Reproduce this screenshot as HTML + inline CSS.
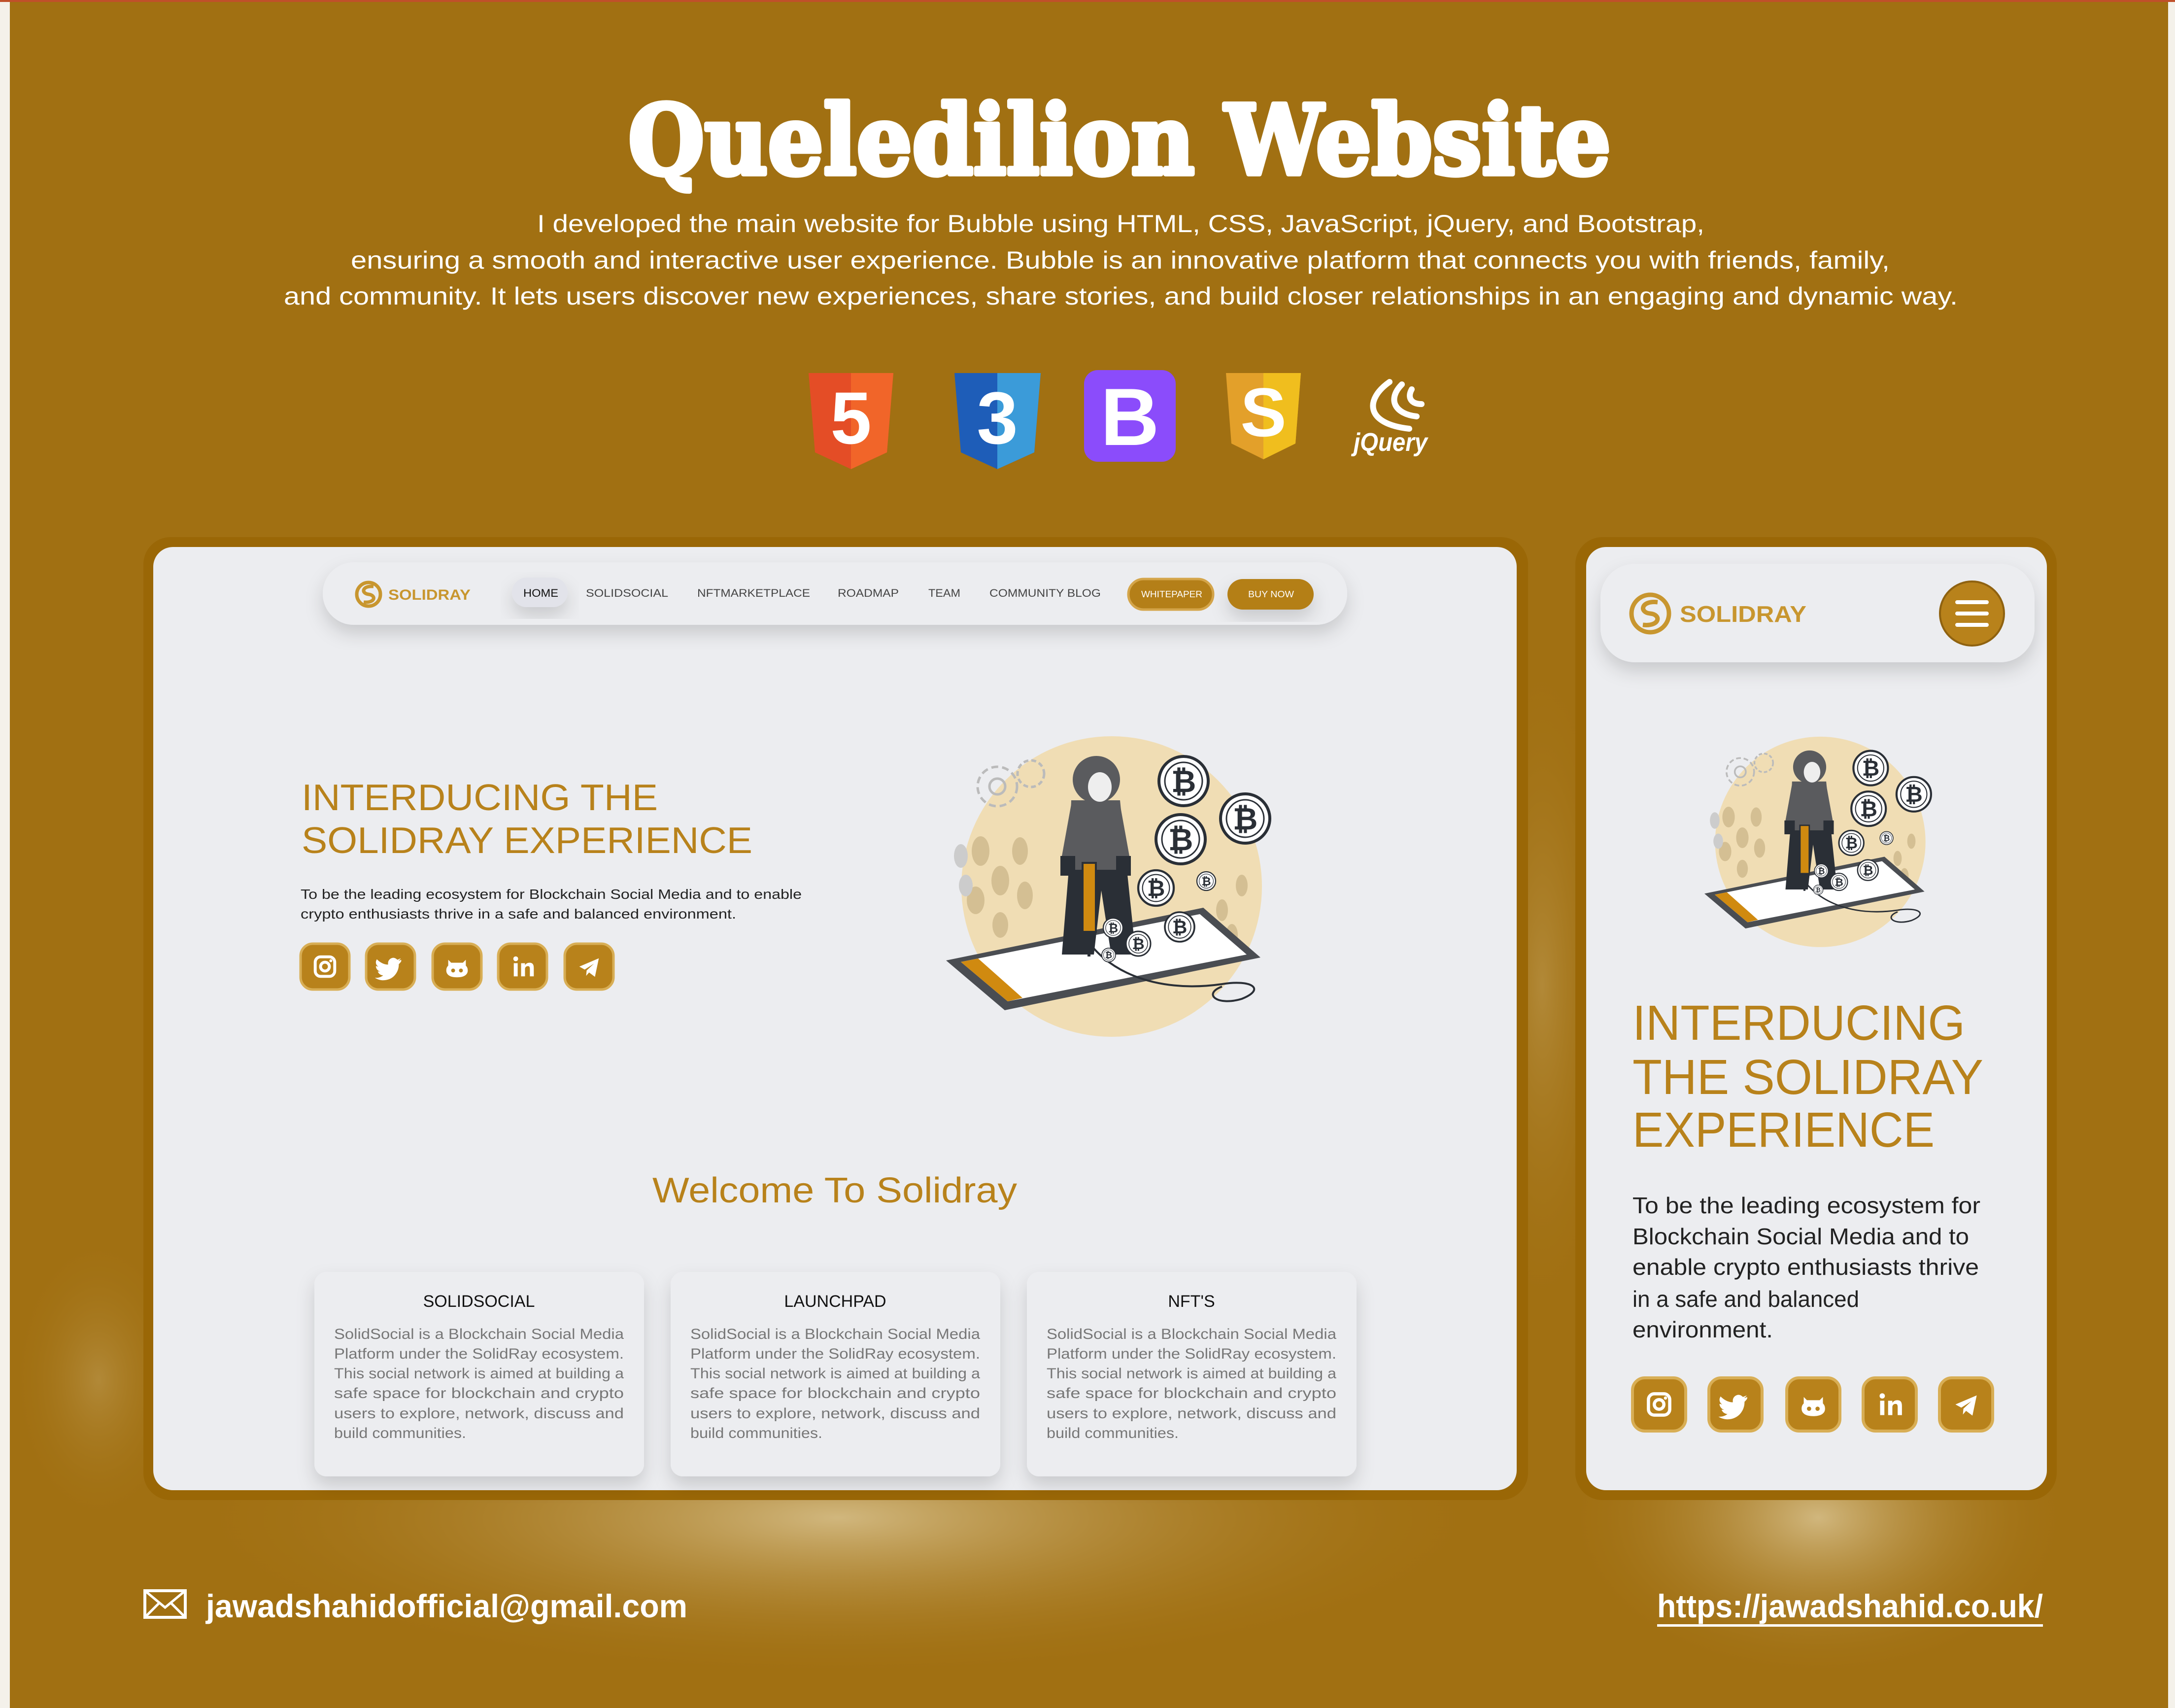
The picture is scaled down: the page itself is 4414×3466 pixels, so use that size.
<!DOCTYPE html>
<html><head><meta charset="utf-8"><style>html,body{margin:0;padding:0;background:#A17012}svg{display:block}</style></head><body>
<svg width="4414" height="3466" viewBox="0 0 4414 3466" xmlns="http://www.w3.org/2000/svg" font-family="Liberation Sans, sans-serif">
<defs>
<radialGradient id="g1" cx="50%" cy="50%" r="50%"><stop offset="0" stop-color="#D9C390" stop-opacity=".85"/><stop offset="1" stop-color="#A17012" stop-opacity="0"/></radialGradient>
<filter id="sh" x="-20%" y="-20%" width="140%" height="160%"><feDropShadow dx="0" dy="18" stdDeviation="18" flood-color="#000" flood-opacity=".15"/></filter>
<symbol id="ig" viewBox="0 0 100 100"><rect x="30" y="30" width="40" height="40" rx="11" fill="none" stroke="#fff" stroke-width="6"/><circle cx="50" cy="50" r="9" fill="none" stroke="#fff" stroke-width="6"/><circle cx="62" cy="38" r="3" fill="#fff"/></symbol>
<symbol id="tw" viewBox="0 0 100 100"><path d="M72 36c-2 1-4 2-6 2 2-1 4-3 5-5-2 1-4 2-7 3-2-2-5-4-8-4-6 0-11 5-11 11 0 1 0 2 0 3-9 0-17-5-23-11-1 2-2 4-2 6 0 4 2 7 5 9-2 0-3-1-5-1 0 5 4 10 9 11-1 0-2 0-3 0h-2c1 4 6 8 11 8-4 3-9 5-14 5h-3c5 3 11 5 17 5 21 0 32-17 32-32v-1c2-2 4-4 5-6z" fill="#fff"/></symbol>
<symbol id="gh" viewBox="0 0 100 100"><path d="M32 36l6 6h24l6-6v12c3 3 4 6 4 10 0 9-8 14-22 14s-22-5-22-14c0-4 1-7 4-10z" fill="#fff"/><circle cx="42" cy="58" r="4" fill="#B8821B"/><circle cx="58" cy="58" r="4" fill="#B8821B"/></symbol>
<symbol id="li" viewBox="0 0 100 100"><rect x="32" y="43" width="8" height="27" fill="#fff"/><circle cx="36" cy="34" r="5" fill="#fff"/><path d="M47 43h8v4c2-3 5-5 9-5 7 0 9 4 9 11v17h-8v-15c0-4-1-6-4-6s-6 2-6 6v15h-8z" fill="#fff"/></symbol>
<symbol id="tg" viewBox="0 0 100 100"><path d="M30 50l40-17-8 38-12-9-6 7 1-11 15-14-19 12z" fill="#fff"/></symbol>
<g id="coin"><circle r="50" fill="#fff" stroke="#2a2f36" stroke-width="6"/><circle r="38" fill="none" stroke="#2a2f36" stroke-width="3"/><text y="22" text-anchor="middle" font-size="62" font-weight="bold" fill="#2a2f36">₿</text></g>
<g id="illus">
<ellipse cx="336" cy="302" rx="305" ry="305" fill="#F0DDB4"/>
<circle cx="104" cy="99" r="40" fill="none" stroke="#bbb" stroke-width="5" stroke-dasharray="14 8"/><circle cx="104" cy="99" r="16" fill="none" stroke="#bbb" stroke-width="5"/>
<circle cx="172" cy="73" r="27" fill="none" stroke="#bbb" stroke-width="5" stroke-dasharray="10 6"/>
<g fill="#D4BF93"><ellipse cx="70" cy="230" rx="18" ry="30"/><ellipse cx="110" cy="290" rx="18" ry="30"/><ellipse cx="60" cy="330" rx="18" ry="28"/><ellipse cx="150" cy="230" rx="16" ry="28"/><ellipse cx="160" cy="320" rx="16" ry="28"/><ellipse cx="110" cy="380" rx="16" ry="26"/><ellipse cx="560" cy="350" rx="12" ry="22"/><ellipse cx="600" cy="300" rx="12" ry="22"/><ellipse cx="580" cy="400" rx="12" ry="22"/></g>
<g fill="#ccc"><ellipse cx="30" cy="240" rx="14" ry="24"/><ellipse cx="40" cy="300" rx="14" ry="22"/></g>
<path d="M0 452L522 345L638 446L119 553Z" fill="#4a4d52"/>
<path d="M30 455L515 358L610 440L125 535Z" fill="#fff"/>
<path d="M30 455L65 448L155 528L125 535Z" fill="#D08A10"/>
<path d="M280 400C320 470 420 520 560 500C620 490 650 510 600 530C550 545 520 520 560 505" fill="none" stroke="#2a2f36" stroke-width="4"/>
<path d="M249 268L367 268L385 440L335 440L315 310L300 440L235 440Z" fill="#2a2f36"/>
<path d="M254 127L353 127L367 268L249 268Z" fill="#5a5b5e"/>
<path d="M254 135L235 240L260 245L270 160Z" fill="#5a5b5e"/><path d="M353 135L372 240L348 245L340 160Z" fill="#5a5b5e"/>
<rect x="232" y="240" width="30" height="40" fill="#2a2f36"/><rect x="345" y="240" width="30" height="40" fill="#2a2f36"/>
<circle cx="305" cy="85" r="48" fill="#5a5b5e"/><ellipse cx="312" cy="100" rx="24" ry="30" fill="#eee"/>
<rect x="277" y="254" width="27" height="140" fill="#D08A10" stroke="#2a2f36" stroke-width="4"/>
<rect x="287" y="394" width="6" height="50" fill="#2a2f36"/>
<use href="#coin" transform="translate(482,88) scale(1)"/>
<use href="#coin" transform="translate(607,164) scale(1)"/>
<use href="#coin" transform="translate(476,206) scale(1)"/>
<use href="#coin" transform="translate(426,305) scale(.72)"/>
<use href="#coin" transform="translate(528,291) scale(.38)"/>
<use href="#coin" transform="translate(474,384) scale(.6)"/>
<use href="#coin" transform="translate(390,418) scale(.5)"/>
<use href="#coin" transform="translate(339,386) scale(.4)"/>
<use href="#coin" transform="translate(330,441) scale(.28)"/>
</g>
</defs>

<rect width="4414" height="3466" fill="#A17012"/>
<rect x="0" y="0" width="20" height="3466" fill="#F4F1EA"/>
<rect x="4400" y="0" width="14" height="3466" fill="#F4F1EA"/>
<rect x="0" y="0" width="4414" height="4" fill="#C0502A"/>

<ellipse cx="1700" cy="3080" rx="1350" ry="330" fill="url(#g1)"/>
<ellipse cx="3690" cy="3080" rx="520" ry="330" fill="url(#g1)"/>
<ellipse cx="200" cy="2800" rx="180" ry="300" fill="url(#g1)" opacity=".35"/>
<ellipse cx="3130" cy="2000" rx="150" ry="700" fill="url(#g1)" opacity=".35"/>

<text x="1275" y="353" font-family="DejaVu Serif, serif" font-weight="bold" font-size="195" fill="#fff" stroke="#fff" stroke-width="10" stroke-linejoin="round" textLength="1994" lengthAdjust="spacingAndGlyphs">Queledilion Website</text>
<g fill="#fff" font-size="50">
<text x="1090" y="471" textLength="2369" lengthAdjust="spacingAndGlyphs">I developed the main website for Bubble using HTML, CSS, JavaScript, jQuery, and Bootstrap,</text>
<text x="712" y="545" textLength="3123" lengthAdjust="spacingAndGlyphs">ensuring a smooth and interactive user experience. Bubble is an innovative platform that connects you with friends, family,</text>
<text x="576" y="618" textLength="3397" lengthAdjust="spacingAndGlyphs">and community. It lets users discover new experiences, share stories, and build closer relationships in an engaging and dynamic way.</text>
</g>

<path d="M1641 757H1813L1800 918L1727 952L1654 918Z" fill="#E44D26"/><path d="M1727 757H1813L1800 918L1727 952Z" fill="#F16529"/>
<text x="1727" y="900" text-anchor="middle" font-size="150" font-weight="bold" fill="#fff">5</text>
<path d="M1937 757H2112L2099 918L2024 952L1950 918Z" fill="#1E5DB8"/><path d="M2024 757H2112L2099 918L2024 952Z" fill="#3B9BD9"/>
<text x="2024" y="900" text-anchor="middle" font-size="150" font-weight="bold" fill="#fff">3</text>
<rect x="2200" y="751" width="186" height="186" rx="28" fill="#8B4CFB"/>
<text x="2293" y="903" text-anchor="middle" font-size="165" font-weight="bold" fill="#fff">B</text>
<path d="M2488 757H2640L2629 900L2564 932L2499 900Z" fill="#E3A02A"/><path d="M2564 757H2640L2629 900L2564 932Z" fill="#F0BE1E"/>
<text x="2564" y="885" text-anchor="middle" font-size="140" font-weight="bold" fill="#fff">S</text>
<g fill="none" stroke="#fff" stroke-width="12" stroke-linecap="round"><path d="M2820 775C2770 810 2770 860 2860 870"/><path d="M2845 780C2815 810 2830 840 2875 845"/><path d="M2865 790C2855 808 2865 820 2885 820"/></g>
<text x="2747" y="915" font-size="52" font-style="italic" font-weight="bold" fill="#fff" textLength="150" lengthAdjust="spacingAndGlyphs">jQuery</text>

<rect x="291" y="1090" width="2810" height="1954" rx="55" fill="#9A6706"/>
<rect x="311" y="1110" width="2767" height="1914" rx="40" fill="#ECEDF0"/>
<rect x="655" y="1141" width="2079" height="127" rx="63" fill="#ECEDF0" filter="url(#sh)"/>
<circle cx="748" cy="1206" r="24" fill="none" stroke="#C8962F" stroke-width="7"/>
<path d="M758 1190C735 1188 732 1204 748 1206C764 1208 762 1224 738 1222" fill="none" stroke="#C8962F" stroke-width="7"/>
<text x="788" y="1217" font-size="30" font-weight="bold" fill="#C8962F" textLength="167" lengthAdjust="spacingAndGlyphs">SOLIDRAY</text>
<rect x="1039" y="1172" width="113" height="60" rx="30" fill="#E2E3EA" filter="url(#sh)"/>
<g font-size="22" fill="#444">
<text x="1062" y="1211" fill="#111" textLength="71" lengthAdjust="spacingAndGlyphs">HOME</text>
<text x="1189" y="1211" textLength="167" lengthAdjust="spacingAndGlyphs">SOLIDSOCIAL</text>
<text x="1415" y="1211" textLength="229" lengthAdjust="spacingAndGlyphs">NFTMARKETPLACE</text>
<text x="1700" y="1211" textLength="124" lengthAdjust="spacingAndGlyphs">ROADMAP</text>
<text x="1884" y="1211" textLength="65" lengthAdjust="spacingAndGlyphs">TEAM</text>
<text x="2008" y="1211" textLength="226" lengthAdjust="spacingAndGlyphs">COMMUNITY BLOG</text>
</g>
<rect x="2290" y="1175" width="172" height="62" rx="31" fill="#B47F18" stroke="#D4A54A" stroke-width="5"/>
<rect x="2491" y="1175" width="175" height="62" rx="31" fill="#B47F18" filter="url(#sh)"/>
<text x="2316" y="1212" font-size="18" fill="#fff" textLength="124" lengthAdjust="spacingAndGlyphs">WHITEPAPER</text>
<text x="2533" y="1212" font-size="18" fill="#fff" textLength="93" lengthAdjust="spacingAndGlyphs">BUY NOW</text>

<text x="612" y="1644" font-size="75" fill="#B8821B" textLength="723" lengthAdjust="spacingAndGlyphs">INTERDUCING THE</text>
<text x="612" y="1731" font-size="75" fill="#B8821B" textLength="915" lengthAdjust="spacingAndGlyphs">SOLIDRAY EXPERIENCE</text>
<text x="610" y="1824" font-size="28" fill="#222" textLength="1017" lengthAdjust="spacingAndGlyphs">To be the leading ecosystem for Blockchain Social Media and to enable</text>
<text x="610" y="1864" font-size="28" fill="#222" textLength="884" lengthAdjust="spacingAndGlyphs">crypto enthusiasts thrive in a safe and balanced environment.</text>
<g>
<rect x="610" y="1915" width="99" height="93" rx="25" fill="#B8821B" stroke="#D8AE55" stroke-width="5"/><use href="#ig" x="610" y="1912" width="99" height="99"/>
<rect x="743" y="1915" width="99" height="93" rx="25" fill="#B8821B" stroke="#D8AE55" stroke-width="5"/><use href="#tw" x="743" y="1912" width="99" height="99"/>
<rect x="878" y="1915" width="99" height="93" rx="25" fill="#B8821B" stroke="#D8AE55" stroke-width="5"/><use href="#gh" x="878" y="1912" width="99" height="99"/>
<rect x="1011" y="1915" width="99" height="93" rx="25" fill="#B8821B" stroke="#D8AE55" stroke-width="5"/><use href="#li" x="1011" y="1912" width="99" height="99"/>
<rect x="1146" y="1915" width="99" height="93" rx="25" fill="#B8821B" stroke="#D8AE55" stroke-width="5"/><use href="#tg" x="1146" y="1912" width="99" height="99"/>
</g>
<use href="#illus" transform="translate(1920,1497)"/>

<text x="1694" y="2440" text-anchor="middle" font-size="72" fill="#B8821B" textLength="740" lengthAdjust="spacingAndGlyphs">Welcome To Solidray</text>

<g font-size="30" fill="#666">
<rect x="638" y="2581" width="669" height="415" rx="25" fill="#ECEDF0" filter="url(#sh)"/>
<rect x="1361" y="2581" width="669" height="415" rx="25" fill="#ECEDF0" filter="url(#sh)"/>
<rect x="2084" y="2581" width="669" height="415" rx="25" fill="#ECEDF0" filter="url(#sh)"/>
<text x="972" y="2652" text-anchor="middle" font-size="34" fill="#111">SOLIDSOCIAL</text>
<text x="1695" y="2652" text-anchor="middle" font-size="34" fill="#111">LAUNCHPAD</text>
<text x="2418" y="2652" text-anchor="middle" font-size="34" fill="#111">NFT'S</text>
</g>
<g font-size="30" fill="#777">
<text x="678" y="2717" textLength="588" lengthAdjust="spacingAndGlyphs">SolidSocial is a Blockchain Social Media</text>
<text x="678" y="2757" textLength="588" lengthAdjust="spacingAndGlyphs">Platform under the SolidRay ecosystem.</text>
<text x="678" y="2797" textLength="588" lengthAdjust="spacingAndGlyphs">This social network is aimed at building a</text>
<text x="678" y="2837" textLength="588" lengthAdjust="spacingAndGlyphs">safe space for blockchain and crypto</text>
<text x="678" y="2878" textLength="588" lengthAdjust="spacingAndGlyphs">users to explore, network, discuss and</text>
<text x="678" y="2918" textLength="268" lengthAdjust="spacingAndGlyphs">build communities.</text>
<text x="1401" y="2717" textLength="588" lengthAdjust="spacingAndGlyphs">SolidSocial is a Blockchain Social Media</text>
<text x="1401" y="2757" textLength="588" lengthAdjust="spacingAndGlyphs">Platform under the SolidRay ecosystem.</text>
<text x="1401" y="2797" textLength="588" lengthAdjust="spacingAndGlyphs">This social network is aimed at building a</text>
<text x="1401" y="2837" textLength="588" lengthAdjust="spacingAndGlyphs">safe space for blockchain and crypto</text>
<text x="1401" y="2878" textLength="588" lengthAdjust="spacingAndGlyphs">users to explore, network, discuss and</text>
<text x="1401" y="2918" textLength="268" lengthAdjust="spacingAndGlyphs">build communities.</text>
<text x="2124" y="2717" textLength="588" lengthAdjust="spacingAndGlyphs">SolidSocial is a Blockchain Social Media</text>
<text x="2124" y="2757" textLength="588" lengthAdjust="spacingAndGlyphs">Platform under the SolidRay ecosystem.</text>
<text x="2124" y="2797" textLength="588" lengthAdjust="spacingAndGlyphs">This social network is aimed at building a</text>
<text x="2124" y="2837" textLength="588" lengthAdjust="spacingAndGlyphs">safe space for blockchain and crypto</text>
<text x="2124" y="2878" textLength="588" lengthAdjust="spacingAndGlyphs">users to explore, network, discuss and</text>
<text x="2124" y="2918" textLength="268" lengthAdjust="spacingAndGlyphs">build communities.</text>
</g>

<rect x="3197" y="1090" width="977" height="1954" rx="55" fill="#9A6706"/>
<rect x="3219" y="1110" width="935" height="1914" rx="40" fill="#ECEDF0"/>
<rect x="3248" y="1144" width="881" height="200" rx="70" fill="#ECEDF0" filter="url(#sh)"/>
<circle cx="3349" cy="1245" r="38" fill="none" stroke="#C8962F" stroke-width="9"/>
<path d="M3364 1222C3330 1218 3326 1243 3349 1245C3372 1247 3369 1272 3334 1268" fill="none" stroke="#C8962F" stroke-width="9"/>
<text x="3409" y="1262" font-size="46" font-weight="bold" fill="#C8962F" textLength="257" lengthAdjust="spacingAndGlyphs">SOLIDRAY</text>
<circle cx="4002" cy="1245" r="65" fill="#B8821B" stroke="#8f6210" stroke-width="4"/>
<g stroke="#fff" stroke-width="8" stroke-linecap="round"><path d="M3972 1222H4032M3972 1245H4032M3972 1268H4032"/></g>
<use href="#illus" transform="translate(3459,1497) scale(0.7)"/>
<g font-size="100" fill="#B8821B">
<text x="3313" y="2110" textLength="675" lengthAdjust="spacingAndGlyphs">INTERDUCING</text>
<text x="3313" y="2220" textLength="712" lengthAdjust="spacingAndGlyphs">THE SOLIDRAY</text>
<text x="3313" y="2327" textLength="613" lengthAdjust="spacingAndGlyphs">EXPERIENCE</text>
</g>
<g font-size="46" fill="#222">
<text x="3313" y="2462" textLength="706" lengthAdjust="spacingAndGlyphs">To be the leading ecosystem for</text>
<text x="3313" y="2525" textLength="683" lengthAdjust="spacingAndGlyphs">Blockchain Social Media and to</text>
<text x="3313" y="2587" textLength="703" lengthAdjust="spacingAndGlyphs">enable crypto enthusiasts thrive</text>
<text x="3313" y="2652" textLength="460" lengthAdjust="spacingAndGlyphs">in a safe and balanced</text>
<text x="3313" y="2714" textLength="285" lengthAdjust="spacingAndGlyphs">environment.</text>
</g>
<g>
<rect x="3313" y="2796" width="108" height="108" rx="25" fill="#B8821B" stroke="#D8AE55" stroke-width="6"/><use href="#ig" x="3313" y="2796" width="108" height="108"/>
<rect x="3468" y="2796" width="108" height="108" rx="25" fill="#B8821B" stroke="#D8AE55" stroke-width="6"/><use href="#tw" x="3468" y="2796" width="108" height="108"/>
<rect x="3626" y="2796" width="108" height="108" rx="25" fill="#B8821B" stroke="#D8AE55" stroke-width="6"/><use href="#gh" x="3626" y="2796" width="108" height="108"/>
<rect x="3781" y="2796" width="108" height="108" rx="25" fill="#B8821B" stroke="#D8AE55" stroke-width="6"/><use href="#li" x="3781" y="2796" width="108" height="108"/>
<rect x="3936" y="2796" width="108" height="108" rx="25" fill="#B8821B" stroke="#D8AE55" stroke-width="6"/><use href="#tg" x="3936" y="2796" width="108" height="108"/>
</g>

<rect x="294" y="3228" width="82" height="54" fill="none" stroke="#fff" stroke-width="6"/>
<path d="M294 3228L335 3262L376 3228M294 3282L324 3252M376 3282L346 3252" fill="none" stroke="#fff" stroke-width="5"/>
<text x="418" y="3282" font-size="66" font-weight="bold" fill="#fff" textLength="977" lengthAdjust="spacingAndGlyphs">jawadshahidofficial@gmail.com</text>
<text x="3363" y="3282" font-size="66" font-weight="bold" fill="#fff" textLength="783" lengthAdjust="spacingAndGlyphs">https://jawadshahid.co.uk/</text>
<rect x="3363" y="3296" width="783" height="5" fill="#fff"/>
</svg>
</body></html>
